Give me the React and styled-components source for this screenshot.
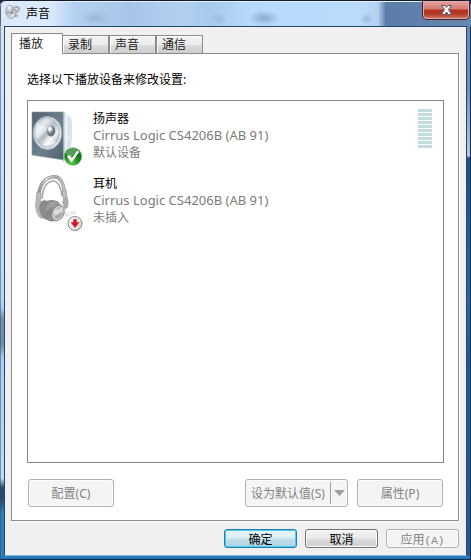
import React, { useState } from 'react';
import styled, { createGlobalStyle, css } from 'styled-components';

const Global = createGlobalStyle`
  * { box-sizing: border-box; }
  body { margin: 0; background: #10243c; }
  body, button { font-family: 'Noto Sans', 'Noto Sans CJK SC', sans-serif; font-size: 12px; line-height: 17px; }
  h1, h2, p, ul { margin: 0; padding: 0; font-size: 12px; }
`;

const Window = styled.main`
  min-height: 100vh;
  display: flex;
  flex-direction: column;
  padding: 0 4px 4px;
  border-radius: 6px 6px 0 0;
  background:
    linear-gradient(90deg, #3a4656, transparent 1px) left / 2px 100% no-repeat,
    linear-gradient(90deg, transparent 1px, #183250 1px) right / 2px 100% no-repeat,
    linear-gradient(#2b80c0, #2675b8 60%, #0e2c46 90%) bottom / 100% 4px no-repeat,
    linear-gradient(#d5e6fa, #b8d8fa 300px, #a9cdf5 308px, #7590b0 318px, #7190b0 345px, #abcdf3 358px, #bedcfb 478px, #27466d 488px, #2c4b74 500px, #2b80c0 512px) left / 4px 100% no-repeat,
    linear-gradient(#6587b2, #7090ba 90px, #b6c9df 156px, #1c4f89 158px, #2c65a5 300px, #235894 360px, #1f5c9c) right / 4px 100% no-repeat,
    #2b70ae;
`;

const TitleBar = styled.header`
  height: 26px;
  margin: 0 -4px;
  padding: 0 1px 0 5px;
  display: flex;
  align-items: flex-start;
  border-top: 1px solid #151c28;
  border-radius: 6px 6px 0 0;
  box-shadow: inset 0 1px #e4effc, inset 1px 0 #56667a;
  background:
    radial-gradient(ellipse 16px 8px at 95px 17px, #7b99bd66, transparent),
    radial-gradient(ellipse 8px 6px at 219px 18px, #7291b755, transparent),
    radial-gradient(ellipse 16px 8px at 264px 17px, #587ba877, transparent),
    radial-gradient(ellipse 7px 6px at 367px 18px, #7195bf66, transparent),
    linear-gradient(90deg, #d9e8fa, #dcebfc 50px, #b5d1f0 75px, #a6c5e9 130px, #b2d0f1 180px, #a8c9ee 210px, #b7d9fc 250px, #bbdbfc 360px, #b4d1f2 378px, #5b7da8 386px, #6887b0 100%);
`;

const AppIcon = styled.svg`
  width: 16px;
  height: 16px;
  margin-top: 3px;
  flex: none;
`;

const Title = styled.h1`
  flex: 1;
  margin: 4px 0 0 5px;
  font-weight: 400;
  color: #000;
`;

const CloseButton = styled.button`
  width: 48px;
  height: 19px;
  padding: 0;
  display: grid;
  place-items: center;
  border: 1px solid #44222c;
  border-top: 0;
  border-radius: 0 0 5px 5px;
  box-shadow: inset 0 0 0 1px #e6a9a5;
  background: linear-gradient(#e4a5a1, #d27b72 45%, #b2321f 50%, #b03a24 70%, #d0796a);
`;

const Client = styled.section`
  flex: 1;
  display: flex;
  flex-direction: column;
  padding: 6px 7px 7px 6px;
  border: 1px solid #24466d;
  border-bottom-color: #86b4d8;
  background: #f0f0f0;
`;

const TabList = styled.div`
  display: flex;
  align-items: flex-end;
  height: 21px;
  margin-bottom: -1px;
  position: relative;
`;

const Tab = styled.button`
  width: ${p => (p.$first ? 46 : 47)}px;
  height: 19px;
  padding: 0 0 0 5px;
  text-align: left;
  color: #1b1b1b;
  border: 1px solid #898c95;
  border-left-width: ${p => (p.$first ? 0 : 1)}px;
  background: linear-gradient(#f3f3f3, #ebebeb 50%, #dddddd 52%, #cdcdcd);
  box-shadow: inset 1px 1px #fbfbfb;
  ${p => p.$active && css`
    width: 52px;
    height: 21px;
    padding: 0 0 2px 7px;
    border-left-width: 1px;
    border-bottom: 0;
    background: #fff;
  `}
`;

const Panel = styled.div`
  flex: 1;
  display: flex;
  flex-direction: column;
  padding: 17px 14px 13px 15px;
  border: 1px solid #898c95;
  background: #fff;
  box-shadow: 1px 1px #fff;
`;

const Prompt = styled.h2`
  font-weight: 400;
  color: #000;
`;

const DeviceList = styled.ul`
  flex: 1;
  margin-top: 12px;
  padding: 7px 11px 7px 3px;
  list-style: none;
  border: 1px solid #828790;
`;

const Device = styled.li`
  display: flex;
  height: 65px;
  padding-top: 1px;
`;

const DeviceIcon = styled.svg`
  width: 52px;
  height: 58px;
  flex: none;
`;

const DeviceText = styled.div`
  flex: 1;
  margin-left: 10px;
  padding-top: 1px;
  color: #7b7b7b;
`;

const DeviceName = styled.p`
  color: #000;
`;

const DeviceModel = styled.p`
  font-size: 13px;
`;

const Meter = styled.div`
  display: grid;
  grid-auto-rows: 3px;
  gap: 1px;
  width: 14px;
`;

const MeterBar = styled.span`
  background: #c1dce2;
`;

const Actions = styled.div`
  display: flex;
  gap: 9px;
  margin: 16px 1px 0;
`;

const Spacer = styled.span`
  flex: 1;
`;

const ActionButton = styled.button`
  width: 86px;
  height: 28px;
  padding: 0;
  color: #838383;
  background: #f4f4f4;
  border: 1px solid #adb2b5;
  border-radius: 3px;
  box-shadow: inset 0 0 0 1px #fcfcfc;
`;

const SplitButton = styled(ActionButton)`
  width: 103px;
  display: flex;
  align-items: center;
  padding: 2px 0;
`;

const SplitLabel = styled.span`
  flex: 1;
`;

const SplitArrow = styled.span`
  width: 17px;
  height: 22px;
  display: grid;
  place-items: center;
  border-left: 1px solid #a0a0a0;
`;

const Footer = styled.footer`
  display: flex;
  justify-content: flex-end;
  gap: 8px;
  margin: 8px 0 0;
`;

const tones = {
  primary: css`
    border-color: #2d78a8;
    background: linear-gradient(#eaf5fa, #d9edf6 48%, #c1dce9 52%, #afd2e3);
    box-shadow: inset 0 0 0 1px #3ed4fa;
  `,
  plain: css`
    border-color: #707070;
    background: linear-gradient(#f2f2f2, #ebebeb 48%, #dddddd 52%, #cfcfcf);
    box-shadow: inset 0 0 0 1px #fafafa;
  `,
  off: css`
    color: #838383;
    border-color: #adb2b5;
    background: #f4f4f4;
    box-shadow: inset 0 0 0 1px #fcfcfc;
  `,
};

const FooterButton = styled.button`
  width: 73px;
  height: 19px;
  padding: 0;
  color: #000;
  font-family: 'Noto Sans CJK SC', sans-serif;
  border: 1px solid;
  border-radius: 3px;
  ${p => tones[p.$tone]}
`;

const Mono = styled.span`
  font-family: 'Liberation Mono', monospace;
  font-size: 11px;
`;

const SpeakerIcon = () => (
  <DeviceIcon viewBox="0 0 52 58" aria-hidden="true">
    <defs>
      <linearGradient id="front" x1="0" y1="0" x2="1" y2="1">
        <stop offset="0" stopColor="#4f626f" /><stop offset=".55" stopColor="#6f818d" /><stop offset="1" stopColor="#4c5f6c" />
      </linearGradient>
      <linearGradient id="side"><stop offset="0" stopColor="#c5d0da" /><stop offset=".35" stopColor="#f1f5fa" /><stop offset="1" stopColor="#d2e0ee" /></linearGradient>
      <linearGradient id="cone" x1="0" y1="0" x2="1" y2="1">
        <stop offset="0" stopColor="#c4cbd2" /><stop offset=".3" stopColor="#e4e8ec" /><stop offset=".5" stopColor="#b3bbc3" /><stop offset=".7" stopColor="#eef1f4" /><stop offset="1" stopColor="#929da8" />
      </linearGradient>
      <radialGradient id="dome" cx=".35" cy=".3"><stop offset="0" stopColor="#f7fafd" /><stop offset=".5" stopColor="#a3adb7" /><stop offset="1" stopColor="#6d7781" /></radialGradient>
      <radialGradient id="green" cx=".4" cy=".85"><stop offset="0" stopColor="#5fd043" /><stop offset=".6" stopColor="#2a9f2d" /><stop offset="1" stopColor="#177b1e" /></radialGradient>
    </defs>
    <path d="M33 3 40 9Q42 23 39 43L32 53Z" fill="url(#side)" stroke="#d2dce6" strokeWidth=".6" />
    <path d="M37 9Q39 18 37 27M37 29Q38 36 35 45" fill="none" stroke="#bccbd9" strokeWidth=".7" />
    <path d="M1 3 33 3V51L1 46Z" fill="url(#front)" stroke="#879aaa" strokeWidth=".6" />
    <path d="M33 3V51" stroke="#dce4eb" />
    <ellipse cx="16.5" cy="24" rx="14.3" ry="16.5" fill="#dde3e8" stroke="#a0adb8" />
    <ellipse cx="16" cy="23.5" rx="12.3" ry="14.5" fill="url(#cone)" stroke="#9ba8b3" strokeWidth=".7" />
    <path d="M18 19 6 14Q3 21 6 30ZM18 25 25 34Q19 39 12 36Z" fill="#fff" opacity=".45" />
    <ellipse cx="20" cy="22" rx="4.3" ry="5.5" fill="url(#dome)" />
    <ellipse cx="19" cy="20" rx="1.7" ry="2" fill="#fff" />
    <circle cx="42" cy="47.5" r="8.7" fill="url(#green)" stroke="#6eae66" strokeWidth=".7" />
    <path d="M34.5 44Q41 35 49 43 43 45 39 48 36 48 34.5 44Z" fill="#fff" opacity=".27" />
    <path d="M36 47.5 38.5 46 41 49 46.5 41.5 48 43 41 53H40Z" fill="#fff" />
  </DeviceIcon>
);

const HeadphonesIcon = () => (
  <DeviceIcon viewBox="0 0 52 58" aria-hidden="true">
    <defs>
      <linearGradient id="band"><stop offset="0" stopColor="#888" /><stop offset=".3" stopColor="#dedede" /><stop offset=".65" stopColor="#aaa" /><stop offset="1" stopColor="#c4c4c4" /></linearGradient>
      <linearGradient id="cup" x1="0" y1="0" x2="1" y2="1"><stop offset="0" stopColor="#adadad" /><stop offset=".5" stopColor="#858585" /><stop offset="1" stopColor="#999" /></linearGradient>
      <linearGradient id="badge" x2="1" y2="1"><stop offset="0" stopColor="#fff" /><stop offset="1" stopColor="#cfcfcf" /></linearGradient>
    </defs>
    <path d="M28 44Q36 37 44 38Q45 40 34 42" fill="none" stroke="#dedede" strokeWidth="1.3" />
    <path d="M7 27Q8 5 21 3Q33 0 34 25" fill="none" stroke="#929292" strokeWidth="3.4" />
    <path d="M7 27Q8 5 21 3Q33 0 34 25" fill="none" stroke="url(#band)" strokeWidth="2.2" />
    <path d="M11 25Q12 8 22 7Q29 7 31 22" fill="none" stroke="#aaa" strokeWidth="1.7" />
    <path d="M6 18 10 19 9 30 5 28ZM31 17 35 16 37 28 33 29Z" fill="#bcbcbc" stroke="#999" strokeWidth=".7" />
    <ellipse cx="9" cy="35" rx="4.5" ry="10" transform="rotate(-14 9 35)" fill="#b5b5b5" />
    <ellipse cx="15" cy="36" rx="6.5" ry="10" transform="rotate(-14 15 36)" fill="#8c8c8c" />
    <path d="M14 28Q20 24 28 28L28 45Q21 50 15 45Z" fill="#888" />
    <ellipse cx="22" cy="37" rx="8" ry="9.5" transform="rotate(24 22 37)" fill="url(#cup)" />
    <path d="M18 31Q24 26 30 31M16 35Q21 30 28 33" fill="none" stroke="#aaa" />
    <ellipse cx="27" cy="39" rx="5.8" ry="8" transform="rotate(26 27 39)" fill="#cfcfcf" stroke="#8b8b8b" />
    <ellipse cx="27.5" cy="39" rx="3.8" ry="6" transform="rotate(26 27.5 39)" fill="#a6a6a6" />
    <path d="M23 37 32 33 31 38 24 42Z" fill="#e8e8e8" opacity=".8" />
    <path d="M34 23Q39 26 37 33L34 36 31 28Z" fill="#aaa" />
    <circle cx="44" cy="49.5" r="7" fill="url(#badge)" stroke="#858585" />
    <path d="M42.5 45.5H45.5V48.5H48L44 53.5 40 48.5H42.5Z" fill="#d51626" stroke="#a50d1b" strokeWidth=".4" />
  </DeviceIcon>
);

const devices = [
  { name: '扬声器', model: 'Cirrus Logic CS4206B (AB 91)', status: '默认设备', Icon: SpeakerIcon, meter: true },
  { name: '耳机', model: 'Cirrus Logic CS4206B (AB 91)', status: '未插入', Icon: HeadphonesIcon },
];
const tabs = ['播放', '录制', '声音', '通信'];

export default function App() {
  const [active, setActive] = useState(0);
  return (
    <>
      <Global />
      <Window>
        <TitleBar>
          <AppIcon viewBox="0 0 16 16" aria-hidden="true">
            <path d="M8 4 11 2 15 4 13 8 11 9 13 12 9 13Z" fill="#a3a9af" stroke="#8d959c" strokeWidth=".6" />
            <path d="M10 4 13 5 10 8 12 11" stroke="#eee" fill="none" />
            <ellipse cx="5.5" cy="8" rx="4.8" ry="6.8" transform="rotate(-12 5.5 8)" fill="#c8cdd1" stroke="#a1a8ad" strokeWidth=".7" />
            <path d="M5 7 2 3 6 2ZM7 9 9 11 7 14Z" fill="#f0f2f4" />
            <path d="M5 8 1 7 2 11ZM7 7 7 2 9 6Z" fill="#a0a7ad" />
            <ellipse cx="6.5" cy="8" rx="1.4" ry="2" fill="#7d858d" />
            <circle cx="6" cy="7" r=".8" fill="#fff" />
          </AppIcon>
          <Title>声音</Title>
          <CloseButton aria-label="关闭">
            <svg width="13" height="12" viewBox="0 0 13 12" aria-hidden="true">
              <path d="M1.5 1.5H5L6.5 3.5 8 1.5H11.5L8.5 5.5 11.5 10.5H8L6.5 8 5 10.5H1.5L4.5 5.5Z" fill="#f8f8f8" stroke="#51596a" />
            </svg>
          </CloseButton>
        </TitleBar>
        <Client>
          <TabList role="tablist">
            {tabs.map((label, i) => (
              <Tab key={label} role="tab" aria-selected={i === active} $active={i === active} $first={i === 1} onClick={() => setActive(i)}>
                {label}
              </Tab>
            ))}
          </TabList>
          <Panel role="tabpanel">
            <Prompt>选择以下播放设备来修改设置:</Prompt>
            <DeviceList>
              {devices.map(({ name, model, status, Icon, meter }) => (
                <Device key={name}>
                  <Icon />
                  <DeviceText>
                    <DeviceName>{name}</DeviceName>
                    <DeviceModel>{model}</DeviceModel>
                    <p>{status}</p>
                  </DeviceText>
                  {meter && <Meter>{Array.from({ length: 10 }, (_, i) => <MeterBar key={i} />)}</Meter>}
                </Device>
              ))}
            </DeviceList>
            <Actions>
              <ActionButton disabled>配置(C)</ActionButton>
              <Spacer />
              <SplitButton disabled>
                <SplitLabel>设为默认值(S)</SplitLabel>
                <SplitArrow>
                  <svg width="11" height="6" viewBox="0 0 11 6" aria-hidden="true"><path d="M0 0H11L5.5 6Z" fill="#a0a0a0" /></svg>
                </SplitArrow>
              </SplitButton>
              <ActionButton disabled>属性(P)</ActionButton>
            </Actions>
          </Panel>
          <Footer>
            <FooterButton $tone="primary">确定</FooterButton>
            <FooterButton $tone="plain">取消</FooterButton>
            <FooterButton $tone="off" disabled>应用<Mono>(A)</Mono></FooterButton>
          </Footer>
        </Client>
      </Window>
    </>
  );
}
